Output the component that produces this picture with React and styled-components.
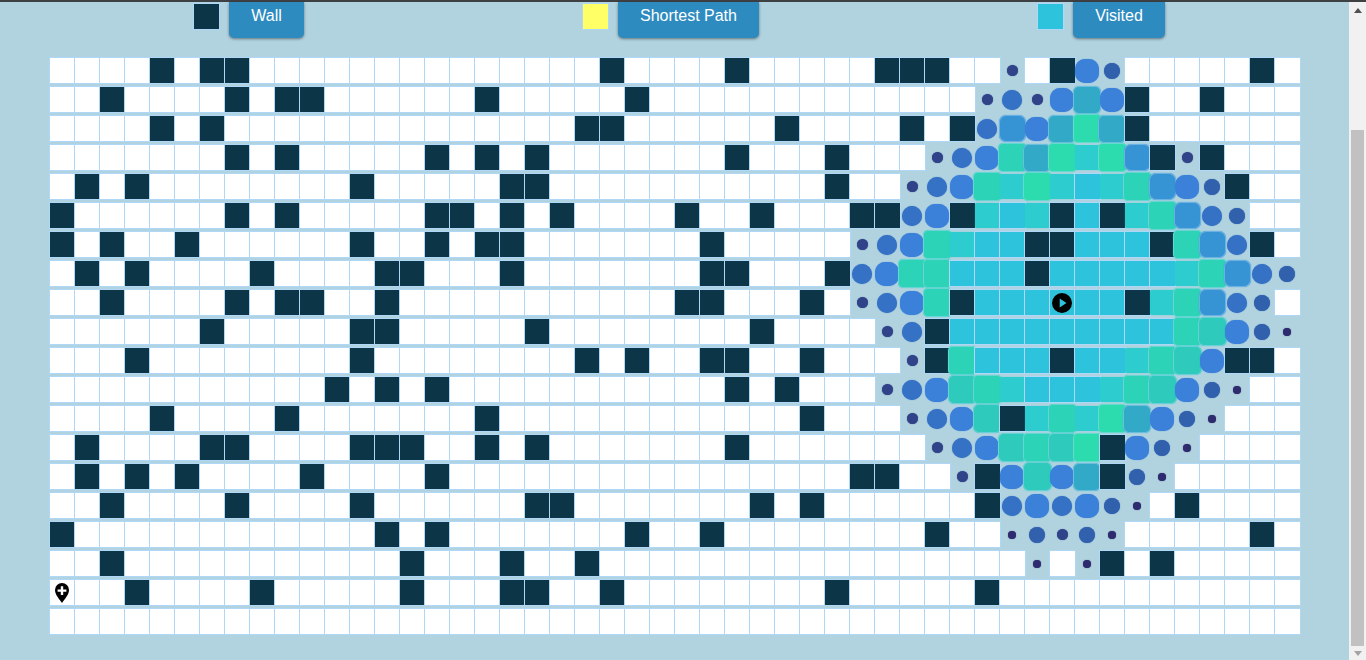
import React from 'react';
import styled, { createGlobalStyle } from 'styled-components';

const bgBlue = '#b1d3e0';
const lineBlue = '#afd8f8';
const wallColor = '#0c3547';
const visitedColor = '#2dc3dc';

// each row: 32 columns on the left, 18 on the right where the search runs
const ROWS = [
  ['....#.##' + '........' + '......#.' + '...#....', '.###..b.#ec.....#.'],
  ['..#....#' + '.##.....' + '.#.....#' + '........', '.....bdbege#..#...'],
  ['....#.#.' + '........' + '.....##.' + '.....#..', '..#.#dfeghg#......'],
  ['.......#' + '.#.....#' + '.#.#....' + '...#...#', '...bdekghihf#b#...'],
  ['.#.#....' + '....#...' + '..##....' + '.......#', '..bdekihivikfec#..'],
  ['#......#' + '.#.....#' + '#.#.#...' + '.#..#...', '##de#ivi#v#ikfdc..'],
  ['#.#..#..' + '....#..#' + '.##.....' + '..#.....', 'bdekivv##vvv#kfd#.'],
  ['.#.#....' + '#....##.' + '..#.....' + '..##...#', 'dekkvvv#vvvvvikfdc'],
  ['..#....#' + '.##..#..' + '........' + '.##...#.', 'bdek#vvvTvv#ikfdc.'],
  ['......#.' + '....##..' + '...#....' + '....#...', '.bd#vvvvvvvvvkteca'],
  ['...#....' + '....#...' + '.....#.#' + '..##..#.', '..b#kvvv#vvikte##.'],
  ['........' + '...#.#.#' + '........' + '...#.#..', '.bdetkivvvikteca..'],
  ['....#...' + '.#......' + '.#......' + '......#.', '..bdet#ikihgeca...'],
  ['.#....##' + '....###.' + '.#.#....' + '...#....', '...bdetkth#eca....'],
  ['.#.#.#..' + '..#....#' + '........' + '........', '##..b#eteg#ca.....'],
  ['..#....#' + '....#...' + '...##...' + '....#.#.', '.....#dedeca.#....'],
  ['#.......' + '.....#.#' + '.......#' + '..#.....', '...#..acbca.....#.'],
  ['..#.....' + '......#.' + '..#..#..' + '........', '.......a.a#.#.....'],
  ['S..#....' + '#.....#.' + '..##..#.' + '.......#', '.....#............'],
  ['........' + '........' + '........' + '........', '..................'],
].map(([left, right]) => (left + right).split(''));

const STAGES = {
  a: { size: 8, radius: '50%', color: '#2e2c6e' },
  b: { size: 11, radius: '50%', color: '#304389' },
  c: { size: 16, radius: '50%', color: '#3160ad' },
  d: { size: 20, radius: '50%', color: '#3571c4' },
  e: { size: 24, radius: '10px', color: '#3b80d9' },
  f: { size: 27, radius: '7px', color: '#3693d4', edge: true },
  g: { size: 28, radius: '6px', color: '#33a9c8', edge: true },
  h: { size: 29, radius: '5px', color: '#2cdcae', edge: true },
  k: { size: 29, radius: '5px', color: '#2cd3b6', edge: true },
  t: { size: 29, radius: '6px', color: '#2ecabb', edge: true },
  i: { size: 25, radius: '2px', color: '#2dcdcf' },
};

const GlobalStyle = createGlobalStyle`
  html,
  body {
    margin: 0;
    height: 660px;
    overflow: hidden;
    background: ${bgBlue};
    font-family: "Liberation Sans", Arial, sans-serif;
  }
`;

const TopEdge = styled.div`
  height: 2px;
  background: #3e4144;
`;

const Frame = styled.div`
  display: flex;
  height: 658px;
`;

const Page = styled.main`
  width: 1349px;
`;

const Legend = styled.div`
  display: flex;
  gap: 279px;
  padding-left: 194px;
  margin-bottom: 20px;
`;

const LegendItem = styled.div`
  display: flex;
  align-items: flex-start;
  gap: 10px;
`;

const Swatch = styled.span`
  width: 25px;
  height: 25px;
  margin-top: 2px;
  background: ${props => props.$color};
  outline: 1px solid ${lineBlue};
`;

const LegendButton = styled.button`
  width: ${props => props.$width}px;
  height: 36px;
  padding: 0 0 8px;
  border: none;
  border-radius: 0 0 5px 5px;
  background: #2e8bc0;
  color: #fff;
  font: 16px/20px "Liberation Sans", Arial, sans-serif;
  box-shadow: 0 1px 3px rgba(0, 0, 0, 0.45);
`;

const Board = styled.div`
  display: grid;
  grid-template-columns: repeat(50, 25px);
  grid-auto-rows: 25px;
  row-gap: 4px;
  padding-left: 50px;
`;

const Cell = styled.div`
  box-sizing: border-box;
  display: flex;
  align-items: center;
  justify-content: center;
  padding-right: 1px;
  outline: 1px solid ${lineBlue};
  background: ${props => props.$fill};
`;

const SearchCell = styled(Cell)`
  outline: none;
`;

const Fill = styled.span`
  box-sizing: border-box;
  flex-shrink: 0;
  width: ${props => props.$stage.size}px;
  height: ${props => props.$stage.size}px;
  border-radius: ${props => props.$stage.radius};
  background: ${props => props.$stage.color};
  border: ${props => (props.$stage.edge ? '1px solid rgba(175, 216, 248, 0.45)' : 'none')};
  box-shadow: 0 0 1px ${props => props.$stage.color};
`;

const Scrollbar = styled.aside`
  display: flex;
  flex-direction: column;
  width: 17px;
  background: #f1f1f1;
`;

const ArrowBox = styled.div`
  display: flex;
  align-items: center;
  justify-content: center;
  flex-shrink: 0;
  height: ${props => props.$height}px;
`;

const Thumb = styled.div`
  flex: 1;
  margin: 111px 2px 0;
  background: #c1c1c1;
`;

const StartIcon = () => (
  <svg width="14" height="20" viewBox="0 0 14 20">
    <path d="M7 0a7 7 0 0 1 7 7c0 4.6-4.4 9.4-7 13C4.4 16.4 0 11.6 0 7a7 7 0 0 1 7-7z" fill="#000" />
    <path d="M5.800 3.200h2.400v3.200h3.200v2.400H8.200V12H5.800V8.800H2.600V6.400h3.200z" fill="#fff" />
  </svg>
);

const TargetIcon = () => (
  <svg width="20" height="20" viewBox="0 0 20 20">
    <path
      d="M10 0a10 10 0 1 1 0 20a10 10 0 0 1 0-20zM7.700 5.600v8.800l6.800-4.400z"
      fill="#000"
      fillRule="evenodd"
    />
  </svg>
);

const Arrow = ({ up, color }) => (
  <svg width="8" height="5" viewBox="0 0 8 5">
    <path d={up ? 'M4 0l4 5H0z' : 'M0 0h8L4 5z'} fill={color} />
  </svg>
);

const renderCell = (code, key) => {
  if (code === '.') return <Cell key={key} $fill="#fff" />;
  if (code === '#') return <Cell key={key} $fill={wallColor} />;
  if (code === 'S') {
    return (
      <Cell key={key} $fill="#fff">
        <StartIcon />
      </Cell>
    );
  }
  if (code === 'v') return <Cell key={key} $fill={visitedColor} />;
  if (code === 'T') {
    return (
      <Cell key={key} $fill={visitedColor}>
        <TargetIcon />
      </Cell>
    );
  }
  return (
    <SearchCell key={key} $fill="transparent">
      <Fill $stage={STAGES[code]} />
    </SearchCell>
  );
};

const LEGEND = [
  { label: 'Wall', color: wallColor, width: 75 },
  { label: 'Shortest Path', color: '#ffff66', width: 141 },
  { label: 'Visited', color: visitedColor, width: 92 },
];

const App = () => (
  <>
    <GlobalStyle />
    <TopEdge />
    <Frame>
      <Page>
        <Legend>
          {LEGEND.map(({ label, color, width }) => (
            <LegendItem key={label}>
              <Swatch $color={color} />
              <LegendButton $width={width}>{label}</LegendButton>
            </LegendItem>
          ))}
        </Legend>
        <Board>
          {ROWS.map((row, y) => row.map((code, x) => renderCell(code, `${y}-${x}`)))}
        </Board>
      </Page>
      <Scrollbar>
        <ArrowBox $height={17}>
          <Arrow up color="#505050" />
        </ArrowBox>
        <Thumb />
        <ArrowBox $height={14}>
          <Arrow color="#a3a3a3" />
        </ArrowBox>
      </Scrollbar>
    </Frame>
  </>
);

export default App;
